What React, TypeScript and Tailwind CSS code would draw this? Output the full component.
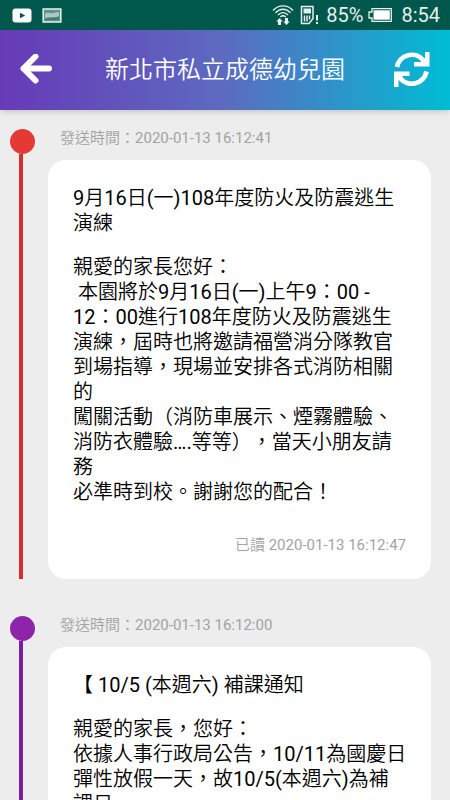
import React from "react";

interface Notice {
	id: number;
	sentAt: string;
	readAt?: string;
	title: string;
	body: string;
	dotColor: string;
	lineColor: string;
}

const notices: Notice[] = [
	{
		id: 1,
		sentAt: "2020-01-13 16:12:41",
		readAt: "2020-01-13 16:12:47",
		title: "9月16日(一)108年度防火及防震逃生演練",
		body: "親愛的家長您好：\n 本園將於9月16日(一)上午9：00 - 12：00進行108年度防火及防震逃生演練，屆時也將邀請福營消分隊教官到場指導，現場並安排各式消防相關的\n闖關活動（消防車展示、煙霧體驗、消防衣體驗….等等），當天小朋友請務\n必準時到校。謝謝您的配合！",
		dotColor: "bg-[#e53935]",
		lineColor: "bg-[#d32f2f]",
	},
	{
		id: 2,
		sentAt: "2020-01-13 16:12:00",
		title: "【 10/5 (本週六) 補課通知",
		body: "親愛的家長，您好：\n依據人事行政局公告，10/11為國慶日彈性放假一天，故10/5(本週六)為補課日",
		dotColor: "bg-[#8e24aa]",
		lineColor: "bg-[#7b1fa2]",
	},
];

function StatusBar() {
	return (
		<div className="h-[30px] shrink-0 bg-[#00574b] text-[#e6f0ee] flex items-center justify-between pl-3 pr-[10px]">
			<div className="flex items-center gap-[10px]">
				{/* video */}
				<svg className="w-5 h-[15px]" viewBox="0 0 20 15">
					<rect x="0.5" y="0.5" width="19" height="14" rx="3" fill="#fff" />
					<path d="M8 4.7v5.6l5.2-2.8z" fill="#00574b" />
				</svg>
				{/* gallery */}
				<svg className="w-5 h-[15px]" viewBox="0 0 20 15">
					<rect x="1.2" y="1" width="17.6" height="13" fill="#5f9389" stroke="#dcebe8" strokeWidth="1.6" />
					<path d="M3 5.5c3-2 5 .5 8-.5s4-1 6-.5V8c-4 2-9 .5-14 2z" fill="#a9c9c3" />
					<path d="M3 11.5c4-2.5 9-1 14-2.5v3H3z" fill="#3f7c72" />
				</svg>
			</div>
			<div className="flex items-center">
				{/* wifi */}
				<svg className="w-[22px] h-[22px]" viewBox="0 0 22 22" fill="none" stroke="currentColor" strokeWidth="1.4">
					<path d="M1 6.5C6.5 .3 15.5 .3 21 6.5" />
					<path d="M3.5 8.8C8 4 14 4 18.5 8.8" />
					<path d="M6 11C9 7.8 13 7.8 16 11" />
					<path d="M8.3 13C10 11.4 12 11.4 13.7 13" />
					<path d="M7.5 14l3.3 3.5H9V21H6v-3.5H4.2z" fill="currentColor" stroke="none" />
					<path d="M14.5 21l3.3-3.5H16V14h-3v3.5h-1.8z" fill="currentColor" stroke="none" />
				</svg>
				{/* sim card */}
				<svg className="w-5 h-5 ml-[6px]" viewBox="0 0 20 20" fill="none" stroke="currentColor" strokeWidth="1.5">
					<path d="M1.5 1.5h11.5v12l-4 5H1.5z" />
					<path d="M3.5 3.5h7.5v5H3.5z" fill="currentColor" stroke="none" />
					<path d="M4.5 10.5v6M7 10.5v6M9.5 10.5v4" />
					<path d="M17 10v5.5M17 17v2" strokeWidth="2" />
				</svg>
				<span className="ml-[6px] text-[20px] leading-6">85%</span>
				{/* battery */}
				<svg className="w-6 h-[14px] ml-[5px]" viewBox="0 0 24 14">
					<path d="M4 .7h19.3v12.6H4V10H1V4h3z" fill="none" stroke="currentColor" strokeWidth="1.3" />
					<rect x="5.5" y="2.3" width="16.3" height="9.4" fill="#fff" />
				</svg>
				<span className="ml-[9px] text-[20px] leading-6">8:54</span>
			</div>
		</div>
	);
}

function Header() {
	return (
		<header className="relative h-20 shrink-0 bg-linear-to-r/srgb from-[#673ab7] via-[#5c6bc0] to-[#00bcd4] text-white flex items-center justify-between px-5 shadow-md">
			<button type="button" aria-label="返回">
				<svg className="w-8 h-8" viewBox="0 0 32 32" fill="none" stroke="currentColor" strokeWidth="6" strokeLinecap="round" strokeLinejoin="round">
					<path d="M29 14.5H3.5M15.5 2.5L3.5 14.5L15.5 26.500" />
				</svg>
			</button>
			<h1 className="pl-1 text-[24px] leading-8">新北市私立成德幼兒園</h1>
			<button type="button" aria-label="重新整理">
				<svg className="w-9 h-9" viewBox="0 0 36 36" fill="none" stroke="currentColor" strokeWidth="4.8">
					<path d="M3 15A15 15 0 0 1 29.5 8.5" />
					<path d="M32.500 19.5A15 15 0 0 1 6 26" />
					<path d="M35.5 -1v15.5H20V10h6.5l4.500-4V-1z" fill="currentColor" stroke="none" />
					<path d="M0 35V19.500h15.500V24H9l-4.500 4v7z" fill="currentColor" stroke="none" />
				</svg>
			</button>
		</header>
	);
}

function NoticeItem({ notice }: { notice: Notice }) {
	return (
		<li className="flex">
			{/* timeline */}
			<div className="w-12 shrink-0 pl-[10px] flex flex-col">
				<span className={`w-[25px] h-[25px] rounded-full ${notice.dotColor}`} />
				<span className={`w-1 ml-[9px] flex-1 ${notice.lineColor}`} />
			</div>

			<div className="flex-1 min-w-0">
				<p className="ml-3 mb-3 text-[15px] leading-[19px] text-[#a3a3a3]">
					發送時間：{notice.sentAt}
				</p>
				<article className="bg-white rounded-[18px] pt-[26px] pb-6 pl-[25px] pr-[23px] text-black">
					<h2 className="text-[20px] leading-[25px]">{notice.title}</h2>
					<p className="mt-[19px] text-[20px] leading-[25px] whitespace-pre-wrap">{notice.body}</p>
					{notice.readAt && (
						<p className="mt-[30px] pr-0.5 text-[15px] leading-5 text-right text-[#a3a3a3]">
							已讀 {notice.readAt}
						</p>
					)}
				</article>
			</div>
		</li>
	);
}

export default function App() {
	return (
		<div
			lang="zh-TW"
			className="h-screen flex flex-col bg-[#ededed] font-['Roboto','Noto_Sans_CJK_TC_DemiLight','Noto_Sans_CJK_TC',sans-serif] [text-spacing-trim:space-all]"
		>
			<StatusBar />
			<Header />
			<main className="flex-1 min-h-0 overflow-y-auto [scrollbar-width:none]">
				<ul className="pt-[19px] pr-[19px] flex flex-col gap-[37px]">
					{notices.map((notice) => (
						<NoticeItem key={notice.id} notice={notice} />
					))}
				</ul>
			</main>
		</div>
	);
}
